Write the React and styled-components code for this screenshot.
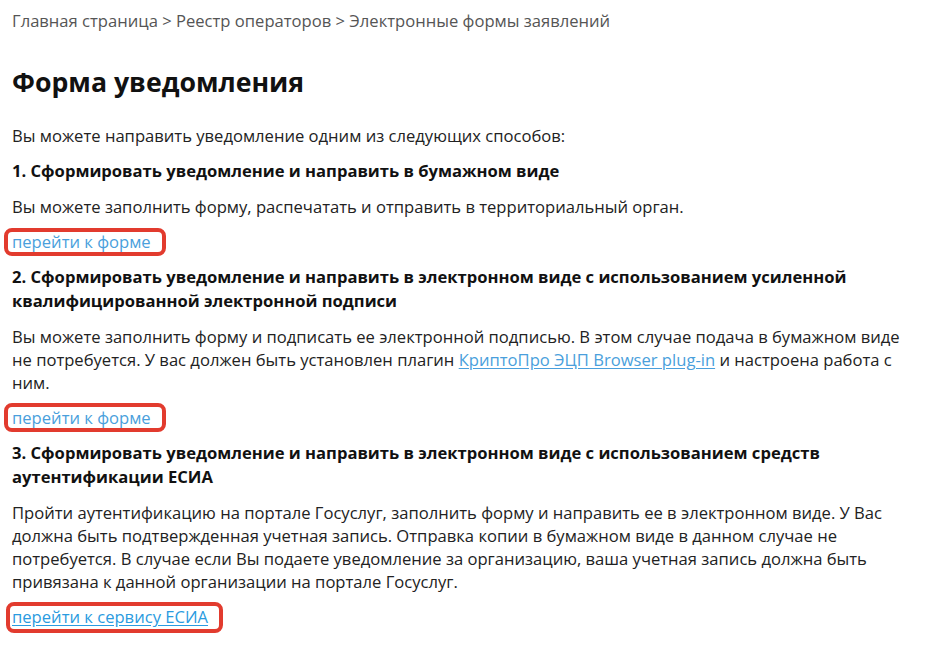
import React from 'react';
import styled, { createGlobalStyle } from 'styled-components';

const GlobalStyle = createGlobalStyle`
  body {
    margin: 0;
    background: #fff;
    font-family: 'Open Sans', 'Noto Sans', sans-serif;
    color: #222;
  }
`;

const Page = styled.div`
  padding: 9px 12px 0;
  width: 910px;
`;

const Breadcrumbs = styled.nav`
  font-size: 16.6px;
  line-height: 23px;
  color: #555;
  margin-bottom: 34px;
`;

const Title = styled.h1`
  font-size: 26.7px;
  line-height: 32px;
  font-weight: 700;
  color: #111;
  margin: 0 0 26px;
`;

const Text = styled.p`
  font-size: 16.6px;
  line-height: 23px;
  margin: 0 0 12px;
  color: #222;
`;

const StepTitle = styled.h3`
  font-size: 16.6px;
  line-height: 24px;
  font-weight: 700;
  color: #111;
  margin: 0 0 12px;
`;

const InlineLink = styled.a`
  color: #4a9fdc;
  text-decoration: underline;
  text-underline-offset: 2px;
`;

const LinkRow = styled.div`
  font-size: 16.6px;
  line-height: 23px;
  margin: 0 0 12px;
`;

// red annotation frame drawn over the link
const Marked = styled.a`
  position: relative;
  color: ${(p) => (p.$visited ? '#2a9be0' : '#4a9fdc')};
  text-decoration: ${(p) => (p.$visited ? 'underline' : 'none')};
  text-underline-offset: 2px;

  &::after {
    content: '';
    position: absolute;
    top: ${(p) => p.$frame[0]}px;
    bottom: ${(p) => p.$frame[1]}px;
    left: ${(p) => p.$frame[2]}px;
    right: -15px;
    border: 4px solid #e23b2e;
    border-radius: 8px;
    pointer-events: none;
  }
`;

const steps = [
  {
    title: '1. Сформировать уведомление и направить в бумажном виде',
    body: <>Вы можете заполнить форму, распечатать и отправить в территориальный орган.</>,
    link: 'перейти к форме',
    frame: [-2.5, -3, -8.5],
  },
  {
    title:
      '2. Сформировать уведомление и направить в электронном виде с использованием усиленной квалифицированной электронной подписи',
    body: (
      <>
        Вы можете заполнить форму и подписать ее электронной подписью. В этом случае подача в
        бумажном виде не потребуется. У вас должен быть установлен плагин{' '}
        <InlineLink href="#">КриптоПро ЭЦП Browser plug-in</InlineLink> и настроена работа с ним.
      </>
    ),
    link: 'перейти к форме',
    frame: [-3, -3, -8],
  },
  {
    title:
      '3. Сформировать уведомление и направить в электронном виде с использованием средств аутентификации ЕСИА',
    body: (
      <>
        Пройти аутентификацию на портале Госуслуг, заполнить форму и направить ее в электронном
        виде. У Вас должна быть подтвержденная учетная запись. Отправка копии в бумажном виде в
        данном случае не потребуется. В случае если Вы подаете уведомление за организацию, ваша
        учетная запись должна быть привязана к данной организации на портале Госуслуг.
      </>
    ),
    link: 'перейти к сервису ЕСИА',
    visited: true,
    frame: [-3.5, -4.5, -6],
  },
];

export default function App() {
  return (
    <>
      <GlobalStyle />
      <Page>
        <Breadcrumbs>
          Главная страница &gt; Реестр операторов &gt; Электронные формы заявлений
        </Breadcrumbs>
        <Title>Форма уведомления</Title>
        <Text>Вы можете направить уведомление одним из следующих способов:</Text>
        {steps.map((step) => (
          <React.Fragment key={step.title}>
            <StepTitle>{step.title}</StepTitle>
            <Text>{step.body}</Text>
            <LinkRow>
              <Marked href="#" $visited={step.visited} $frame={step.frame}>
                {step.link}
              </Marked>
            </LinkRow>
          </React.Fragment>
        ))}
      </Page>
    </>
  );
}
